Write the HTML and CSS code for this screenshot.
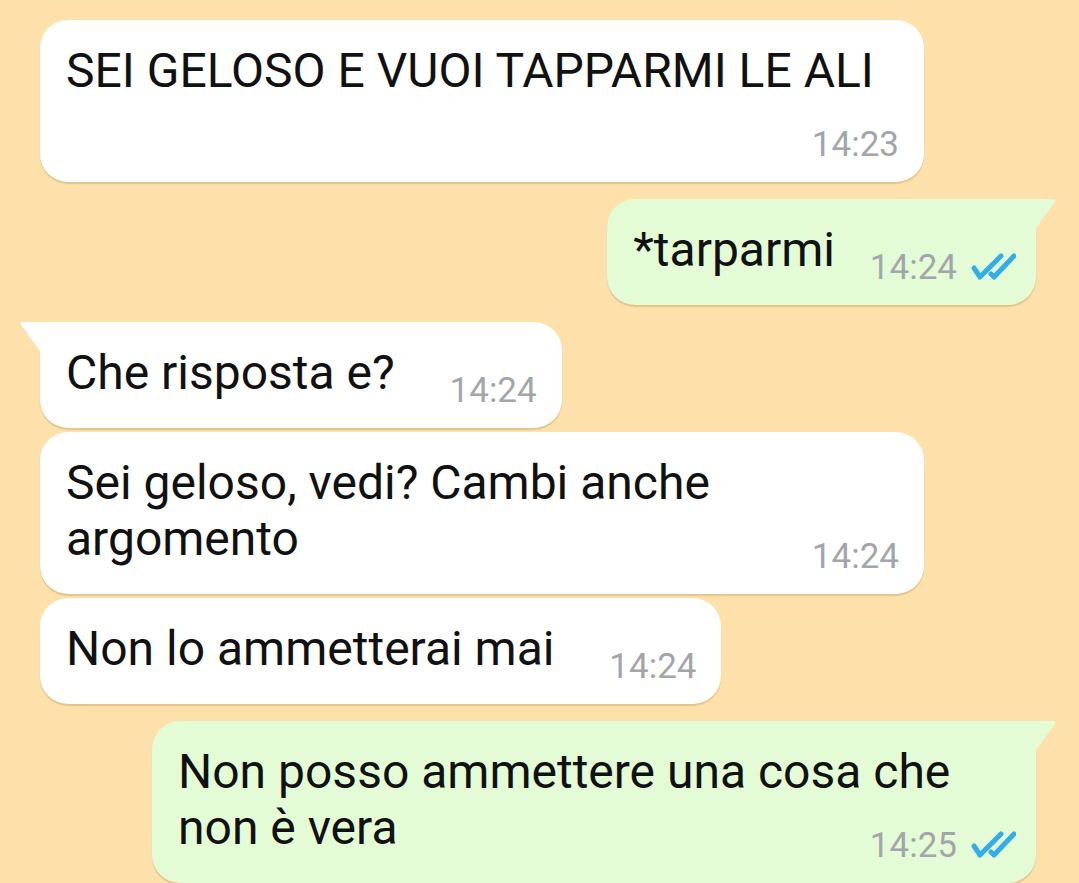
FILE: index.html
```html
<!DOCTYPE html>
<html lang="it">
<head>
  <meta charset="UTF-8" />
  <meta name="viewport" content="width=device-width, initial-scale=1.0" />
  <title>Chat</title>
  <link rel="stylesheet" href="styles.css">
</head>
<body>
  <div class="chat">
    <div class="msg in">
      <p class="text">SEI GELOSO E VUOI TAPPARMI LE ALI<span class="spacer"></span></p>
      <div class="meta"><span class="time">14:23</span></div>
    </div>

    <div class="msg out tail first">
      <p class="text">*tarparmi<span class="spacer"></span></p>
      <div class="meta">
        <span class="time">14:24</span>
        <svg class="ticks" width="46" height="28" viewBox="0 0 46 28"><polyline points="4,15 10,24 31,3" /><polyline points="21,21 24,24 44,3" /></svg>
      </div>
    </div>

    <div class="msg in tail first">
      <p class="text">Che risposta e?<span class="spacer"></span></p>
      <div class="meta"><span class="time">14:24</span></div>
    </div>

    <div class="msg in">
      <p class="text">Sei geloso, vedi? Cambi anche argomento<span class="spacer"></span></p>
      <div class="meta"><span class="time">14:24</span></div>
    </div>

    <div class="msg in">
      <p class="text">Non lo ammetterai mai<span class="spacer"></span></p>
      <div class="meta"><span class="time">14:24</span></div>
    </div>

    <div class="msg out tail first">
      <p class="text">Non posso ammettere una cosa che non è vera<span class="spacer"></span></p>
      <div class="meta">
        <span class="time">14:25</span>
        <svg class="ticks" width="46" height="28" viewBox="0 0 46 28"><polyline points="4,15 10,24 31,3" /><polyline points="21,21 24,24 44,3" /></svg>
      </div>
    </div>
  </div>
</body>
</html>
```

FILE: styles.css
```css
body {
  margin: 0;
  background-color: #fde0aa;
  font-family: Roboto, 'Noto Sans', sans-serif;
  color: #111;
}
.chat {
  display: flex;
  flex-direction: column;
  gap: 4px;
  padding: 20px 43px 4px 40px;
}
.msg {
  position: relative;
  display: grid;
  max-width: 833px;
  padding: 23px 25px 27px 26px;
  border-radius: 28px;
  box-shadow: 0 2px 1px rgba(150, 110, 40, 0.25);
}
.msg.first {
  margin-top: 13px;
}
.in {
  align-self: flex-start;
  background-color: #ffffff;
}
.out {
  align-self: flex-end;
  max-width: 838px;
  background-color: #e3fcd6;
  padding-right: 20px;
}
.text,
.meta {
  grid-area: 1 / 1;
}
.text {
  margin: 0;
  font-size: 48px;
  line-height: 56px;
}
.spacer {
  display: inline-block;
  width: 142px;
  height: 1px;
}
.out .spacer {
  width: 181px;
}
.meta {
  justify-self: end;
  align-self: end;
  display: flex;
  align-items: flex-end;
  gap: 13px;
  margin-bottom: -7px;
}
.time {
  font-size: 35px;
  line-height: 35px;
  color: #a2a6aa;
}
.ticks {
  margin-bottom: 4px;
  fill: none;
  stroke: #33ade8;
  stroke-width: 5;
  stroke-linecap: round;
  stroke-linejoin: round;
}
/* tails */
.in.tail {
  border-top-left-radius: 0;
}
.out.tail {
  border-top-right-radius: 0;
}
.tail::before {
  content: '';
  position: absolute;
  top: 0;
  width: 23px;
  height: 32px;
  background: inherit;
}
.in.tail::before {
  left: -21px;
  clip-path: path('M23 0 L4 0 Q0 0 2.5 3.5 L23 32 Z');
}
.out.tail::before {
  right: -21px;
  clip-path: path('M0 0 L19 0 Q23 0 20.5 3.5 L0 32 Z');
}
```
